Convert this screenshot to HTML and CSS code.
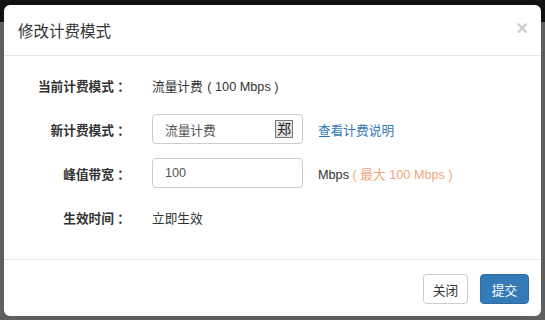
FILE: index.html
```html
<!DOCTYPE html>
<html lang="zh">
<head>
<meta charset="utf-8">
<link rel="stylesheet" href="styles.css">
</head>
<body>
<div class="modal">
  <div class="modal-header">
    <h4 class="modal-title">修改计费模式</h4>
    <span class="close">×</span>
  </div>
  <div class="modal-body">
    <div class="row">
      <label class="label">当前计费模式<span class="colon">：</span></label>
      <div class="value">流量计费 <span class="paren">( 100 Mbps )</span></div>
    </div>
    <div class="row">
      <label class="label">新计费模式<span class="colon">：</span></label>
      <div class="input select"><span>流量计费</span><span class="glyph">郑</span></div>
      <a class="link">查看计费说明</a>
    </div>
    <div class="row">
      <label class="label">峰值带宽<span class="colon">：</span></label>
      <div class="input">100</div>
      <span class="unit">Mbps <span class="hint">( 最大 100 Mbps )</span></span>
    </div>
    <div class="row">
      <label class="label">生效时间<span class="colon">：</span></label>
      <div class="value">立即生效</div>
    </div>
  </div>
  <div class="modal-footer">
    <button class="btn btn-default">关闭</button>
    <button class="btn btn-primary">提交</button>
  </div>
</div>
</body>
</html>
```
FILE: styles.css
```css
html, body {
  margin: 0;
  height: 100%;
}
body {
  background: linear-gradient(#121212 0, #121212 22px, #5f5f5f 22px, #5f5f5f 100%);
  font-family: "Liberation Sans", "Noto Sans CJK SC", sans-serif;
  font-size: 12.7px;
  color: #333;
  padding: 5px 4px 0 4px;
  box-sizing: border-box;
}
.modal {
  width: 537px;
  height: 311px;
  background: #fff;
  border-radius: 6px;
  display: flex;
  flex-direction: column;
  box-sizing: border-box;
}
.modal-header {
  height: 51px;
  box-sizing: border-box;
  border-bottom: 1px solid #e5e5e5;
  padding: 0 13px 0 14px;
  display: flex;
  align-items: center;
  justify-content: space-between;
}
.modal-title {
  margin: 0;
  font-size: 15.5px;
  font-weight: normal;
  color: #333;
}
.close {
  font-size: 20px;
  font-weight: bold;
  color: #cdcdcd;
  line-height: 1;
  margin-bottom: 4px;
}
.modal-body {
  height: 203px;
  box-sizing: border-box;
  padding-top: 14px;
  display: flex;
  flex-direction: column;
  gap: 14px;
}
.row {
  display: flex;
  align-items: center;
  height: 30px;
}
.label {
  width: 126px;
  text-align: right;
  font-weight: bold;
  margin-right: 22px;
}
.colon {
  display: inline-block;
  width: 16px;
  text-align: right;
}
.value {
  color: #333;
}
.paren {
  margin-left: 1px;
}
.input {
  width: 151px;
  height: 30px;
  box-sizing: border-box;
  border: 1px solid #ccc;
  border-radius: 4px;
  padding: 0 12px;
  display: flex;
  align-items: center;
  justify-content: space-between;
  margin-right: 15px;
  color: #555;
}
.select {
  padding-right: 9px;
}
.glyph {
  display: inline-flex;
  align-items: center;
  justify-content: center;
  width: 16px;
  height: 16px;
  border: 1px solid #777;
  background: #e4e4e4;
  color: #222;
  font-size: 14px;
  line-height: 1;
}
.link {
  color: #337ab7;
}
.unit {
  color: #333;
}
.hint {
  color: #f3a57c;
}
.modal-footer {
  flex: 1;
  border-top: 1px solid #e5e5e5;
  display: flex;
  justify-content: flex-end;
  align-items: flex-start;
  padding: 14px 12px 0 0;
  gap: 12px;
}
.btn {
  font-family: inherit;
  font-size: 12.7px;
  height: 30px;
  width: 45px;
  padding: 0;
  border-radius: 4px;
  border: 1px solid #ccc;
  background: #fff;
  color: #333;
}
.btn-primary {
  width: 49px;
  background: #337ab7;
  border-color: #2e6da4;
  color: #fff;
}
```
